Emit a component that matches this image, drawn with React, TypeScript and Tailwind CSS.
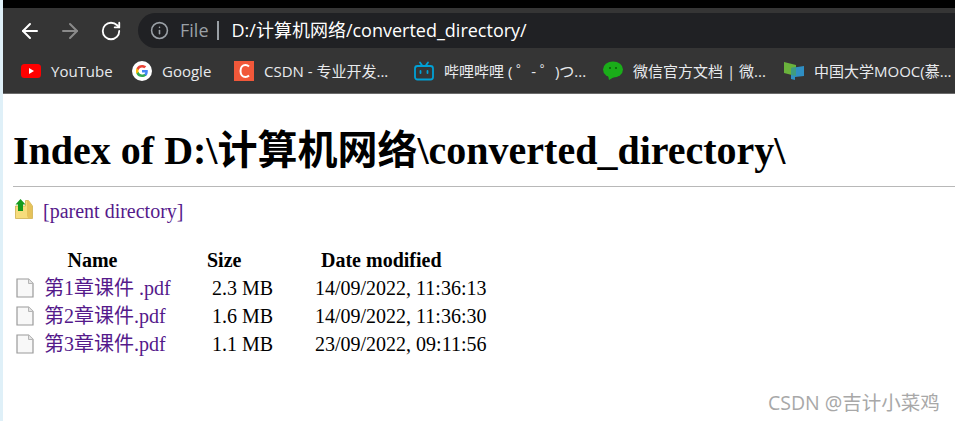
import React from 'react';
import { ArrowLeft, ArrowRight, Info, RotateCw } from 'lucide-react';

const ui = { fontFamily: '"Open Sans", "Noto Sans CJK SC", sans-serif' };
const serif = { fontFamily: '"Liberation Serif", "Noto Sans CJK SC", serif' };

const files = [
  { name: '第1章课件 .pdf', size: '2.3 MB', date: '14/09/2022, 11:36:13' },
  { name: '第2章课件.pdf', size: '1.6 MB', date: '14/09/2022, 11:36:30' },
  { name: '第3章课件.pdf', size: '1.1 MB', date: '23/09/2022, 09:11:56' },
];

function YouTubeIcon() {
  return (
    <svg width="20" height="14" viewBox="0 0 20 14">
      <rect width="20" height="14" rx="3.5" fill="#f00" />
      <path d="M8 4l5 3-5 3z" fill="#fff" />
    </svg>
  );
}

function GoogleIcon() {
  return (
    <svg width="20" height="20" viewBox="0 0 20 20">
      <circle cx="10" cy="10" r="10" fill="#fff" />
      <path d="M15.8 10.2c0-.5 0-.9-.1-1.3H10v2.5h3.3c-.1.8-.6 1.5-1.3 1.9v1.6h2.1c1.2-1.1 1.7-2.8 1.7-4.7z" fill="#4285f4" />
      <path d="M10 16c1.6 0 3-.5 4.1-1.5L12 12.9c-.6.4-1.2.6-2 .6-1.6 0-2.9-1-3.4-2.4H4.5v1.6C5.5 14.8 7.6 16 10 16z" fill="#34a853" />
      <path d="M6.6 11.1c-.3-.7-.3-1.5 0-2.2V7.3H4.5c-.7 1.5-.7 3.9 0 5.4z" fill="#fbbc05" />
      <path d="M10 6.4c.9 0 1.7.3 2.3.9L14.2 5.500C13.100 4.500 11.600 4 10 4 7.600 4 5.500 5.200 4.500 7.300l2.100 1.600C7.100 7.400 8.400 6.400 10 6.400z" fill="#ea4335" />
    </svg>
  );
}

function CsdnIcon() {
  return (
    <svg width="20" height="20" viewBox="0 0 20 20">
      <rect width="20" height="20" fill="#f1583a" />
      <path d="M15 5.500C14 4.500 12.800 4 11.500 4 8.500 4 6.500 6.500 6.500 10s2 6 5 6c1.300 0 2.500-.5 3.500-1.500" fill="none" stroke="#fff" strokeWidth="2" />
    </svg>
  );
}

function BilibiliIcon() {
  return (
    <svg width="20" height="20" viewBox="0 0 20 20" fill="none" stroke="#00a1d6" strokeWidth="1.800">
      <rect x="1" y="5" width="18" height="13.500" rx="2.500" />
      <path d="M6 1.500L8.500 5M14 1.500L11.500 5" strokeLinecap="round" />
      <path d="M6.500 10v2M13.500 10v2" strokeLinecap="round" />
    </svg>
  );
}

function WechatIcon() {
  return (
    <svg width="20" height="20" viewBox="0 0 20 20">
      <ellipse cx="10" cy="8.500" rx="10" ry="8" fill="#1aad19" />
      <path d="M5 14l1 5 5-3z" fill="#1aad19" />
      <circle cx="7" cy="7" r="1" fill="#0b5c0a" />
      <circle cx="13" cy="7" r="1" fill="#0b5c0a" />
    </svg>
  );
}

function MoocIcon() {
  return (
    <svg width="20" height="18" viewBox="0 0 20 18">
      <path d="M0 0l12 3v11L0 11z" fill="#6ab23c" />
      <path d="M7 6l13-2v10l-9 1v3l-4-1z" fill="#2f8fc4" />
      <path d="M7 6l5-1v9l-5-1z" fill="#3f9c80" />
    </svg>
  );
}

function ParentIcon() {
  return (
    <svg width="20" height="20" viewBox="0 0 20 20">
      <path d="M2.500 7h10V1.500h3L19.500 7v12.500h-17z" fill="#f6dc7c" stroke="#cfae4c" strokeWidth="0.800" />
      <path d="M14 2h1.500l3.500 5v12h-4l-1-2z" fill="#e6c25a" />
      <path d="M7.500 0l5 5.500H10V12H5V5.500H2.500z" fill="#149a1c" />
    </svg>
  );
}

function FileIcon() {
  return (
    <svg width="18" height="20" viewBox="0 0 18 20">
      <path d="M1 1h11.500L17 5.500V19H1z" fill="#f8f8f8" stroke="#9a9a9a" strokeWidth="1.200" />
      <path d="M12.500 1v4.500H17" fill="#e4e4e4" stroke="#b5b5b5" />
    </svg>
  );
}

function Bookmark({ icon, label, width }: { icon: React.ReactNode; label: string; width: string }) {
  return (
    <div className={`flex items-center gap-[10px] shrink-0 ${width}`}>
      <span className="w-5 flex justify-center shrink-0">{icon}</span>
      <span className="text-[15px] text-[#e8eaed] whitespace-nowrap">{label}</span>
    </div>
  );
}

export default function App() {
  return (
    <div className="relative h-[421px] w-[955px] flex overflow-hidden bg-white" style={serif}>
      <div className="w-[3px] shrink-0 bg-[#dff0f8]" />
      <div className="flex-1 min-w-0">
        <div className="h-[94px] bg-[#353535] border-b border-[#6b6b6b] overflow-hidden" style={ui}>
          <div className="h-2 bg-black" />
          <div className="h-[45px] flex items-center pl-[15px]">
            <ArrowLeft className="w-[24px] h-[24px] text-white" strokeWidth={2} />
            <ArrowRight className="w-[24px] h-[24px] text-[#8a8a8a] ml-[16px]" strokeWidth={2} />
            <RotateCw className="w-[22px] h-[22px] text-white ml-[18px]" strokeWidth={2} />
            <div className="ml-[16px] flex-1 h-[35px] bg-[#202124] rounded-l-[18px] flex items-center pl-[12px]">
              <Info className="w-[19px] h-[19px] text-[#9aa0a6]" strokeWidth={2} />
              <span className="ml-[11px] text-[18px] text-[#9aa0a6]">File</span>
              <span className="ml-[8px] w-[2px] h-[19px] bg-[#9aa0a6]" />
              <span className="ml-[13px] text-[18px] text-white whitespace-nowrap">D:/计算机网络/converted_directory/</span>
            </div>
          </div>
          <div className="h-[36px] flex items-center pl-[18px]">
            <Bookmark icon={<YouTubeIcon />} label="YouTube" width="w-[111px]" />
            <Bookmark icon={<GoogleIcon />} label="Google" width="w-[102px]" />
            <Bookmark icon={<CsdnIcon />} label="CSDN - 专业开发..." width="w-[180px]" />
            <Bookmark icon={<BilibiliIcon />} label="哔哩哔哩 ( ゜- ゜)つ..." width="w-[189px]" />
            <Bookmark icon={<WechatIcon />} label="微信官方文档 | 微..." width="w-[181px]" />
            <Bookmark icon={<MoocIcon />} label="中国大学MOOC(慕..." width="w-[160px]" />
          </div>
        </div>

        <div className="pl-[10px] text-black">
          <h1 className="text-[40px] font-bold leading-[42px] mt-[36px] whitespace-nowrap">Index of D:\计算机网络\converted_directory\</h1>
          <div className="h-px bg-[#b8b8b8] mt-[14px]" />
          <div className="flex items-center mt-[13px] h-[22px] text-[20px]">
            <span className="self-start -mt-[1px]"><ParentIcon /></span>
            <a className="ml-[10px] text-[#551a8b]">[parent directory]</a>
          </div>
          <table className="mt-[24px] text-[20px] leading-[28px] border-collapse">
            <thead>
              <tr className="font-bold">
                <th className="w-[192px] text-center pr-[33px] font-bold">Name</th>
                <th className="w-[76px] text-left pl-[2px] font-bold">Size</th>
                <th className="w-[180px] text-left pl-[40px] font-bold whitespace-nowrap">Date modified</th>
              </tr>
            </thead>
            <tbody>
              {files.map((f) => (
                <tr key={f.name}>
                  <td>
                    <div className="flex items-center">
                      <span className="ml-[3px]"><FileIcon /></span>
                      <a className="ml-[10px] text-[#551a8b] whitespace-nowrap">{f.name}</a>
                    </div>
                  </td>
                  <td className="pl-[7px] whitespace-nowrap">{f.size}</td>
                  <td className="pl-[34px] whitespace-nowrap">{f.date}</td>
                </tr>
              ))}
            </tbody>
          </table>
        </div>
      </div>
      <span className="absolute left-[768px] top-[388px] text-[19.500px] text-[#a8a8a8]" style={ui}>CSDN @吉计小菜鸡</span>
    </div>
  );
}
